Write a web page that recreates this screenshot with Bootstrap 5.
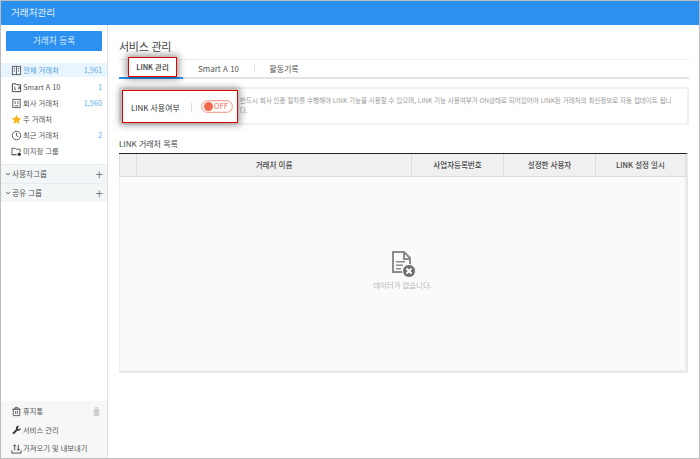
<!DOCTYPE html>
<html lang="ko">
<head>
    <meta charset="UTF-8">
    <meta name="viewport" content="width=device-width, initial-scale=1.0">
    <title>서비스 관리</title>
    <link href="https://cdn.jsdelivr.net/npm/bootstrap@5.3.2/dist/css/bootstrap.min.css" rel="stylesheet">
    <style>
        html, body { height: 100%; overflow: hidden; }
        body { font-family: "Noto Sans CJK KR", "Noto Sans", sans-serif; font-size: 7.3px; color: #444; background: #fff; }
        .app-frame { width: 700px; height: 459px; border: 1px solid #bdbdbd; display: flex; flex-direction: column; }
        .app-head { height: 24px; flex: none; background: #2b90ef; color: #e4f1fd; font-size: 9.6px; line-height: 22px; padding-left: 10px; }
        .app-body { flex: 1; min-height: 0; display: flex; }
        .side { width: 107px; flex: none; border-right: 1px solid #e2e2e2; display: flex; flex-direction: column; }
        .side-btn { display: block; margin: 6px 5px 0; width: 96px; height: 20px; padding: 0; border: 0; border-radius: 1px; background: #2b90ef; color: #dcedfd; font-size: 8.7px; line-height: 20px; }
        .side-list { margin-top: 12px; margin-bottom: 5px; }
        .side-row { height: 16px; padding: 0 5px 0 10px; display: flex; align-items: center; gap: 1px; color: #555; white-space: nowrap; }
        .side-row.on { height: 14px; margin-bottom: 2px; background: #e9f5fe; color: #4a9fe0; }
        .side-row svg { width: 11px; height: 11px; flex: none; }
        .side-row .cnt { margin-left: auto; color: #63aeea; }
        .side-group { height: 19px; background: #f3f6f7; border-top: 1px solid #e8ecee; padding: 0 4px; display: flex; align-items: center; gap: 1px; color: #555; font-size: 7.6px; }
        .side-group .plus { margin-left: auto; color: #666; font-size: 14px; line-height: 1; font-weight: 300; }
        .side-group svg { width: 6px; height: 6px; }
        .side-foot { margin-top: auto; background: #f7f7f7; padding-top: 2px; }
        .side-foot .side-row { height: 18.5px; }
        .main { flex: 1; min-width: 0; padding: 13px 10px 0 11px; }
        .main-title { font-size: 11px; font-weight: 400; line-height: 17px; letter-spacing: -.25px; color: #444; margin: 0; padding-bottom: 4px; border-bottom: 1px solid #eee; }
        .tab-strip { height: 19px; border-bottom: 2px solid #e4e4e4; display: flex; }
        .tab-item { width: 64px; text-align: center; font-size: 8px; line-height: 17px; color: #555; position: relative; }
        .tab-item.on { border-bottom: 2px solid #2b90ef; height: 19px; }
        .tab-item + .tab-item { width: 71px; }
        .tab-item + .tab-item + .tab-item { width: 60px; }
        .tab-item + .tab-item + .tab-item::before { content: ""; position: absolute; left: 0; top: 5px; height: 7px; border-left: 1px solid #e2e2e2; }
        .red-tab { position: absolute; left: 9px; top: -3px; width: 49px; height: 20px; border: 1px solid #e00000; background: #fff; box-shadow: 0 0 7px 2px rgba(0,0,0,.4); color: #333; font-size: 7.4px; line-height: 18px; font-weight: 500; }
        .info-box { height: 38px; margin-top: 8px; border: 2px solid #f1f1f1; display: flex; align-items: center; font-size: 6.5px; line-height: 10px; color: #999; }
        .red-box { width: 116px; height: 33px; flex: none; margin-left: 1px; border: 1px solid #e00000; background: #fff; box-shadow: 0 0 7px 2px rgba(0,0,0,.4); display: flex; align-items: center; padding-left: 8px; font-size: 7.9px; color: #333; position: relative; }
        .red-label { padding-top: 3px; }
        .red-box .sep { width: 1px; height: 9px; background: #ddd; margin: 3px 9px 0 11px; }
        .toggle-pill { width: 32px; height: 13px; border: 1px solid #f4a596; border-radius: 7px; background: #fff; display: flex; align-items: center; gap: 1px; padding-left: 2px; color: #f28a78; font-size: 7.6px; font-weight: 500; box-shadow: inset 0 0 0 1px #fde6e1; }
        .toggle-pill i { width: 9px; height: 9px; border-radius: 50%; background: #f4674f; flex: none; }
        .info-text { padding-left: 2px; padding-right: 8px; margin-top: -2px; width: 453px; }
        .sub-title { font-size: 8px; line-height: 12px; margin: 13px 0 3px; color: #444; }
        .grid-wrap { border-top: 1px solid #222; border-right: 2px solid #e8e8e8; border-bottom: 2px solid #e8e8e8; width: 569px; }
        .grid-table { margin: 0; table-layout: fixed; width: 100%; border-collapse: collapse; }
        .grid-table th { height: 22px; padding: 0; background: #f0f0f0; border: 1px solid #dcdcdc; border-top: 0; text-align: center; vertical-align: middle; font-size: 7.5px; font-weight: 500; color: #444; }
        .grid-table td { height: 194px; padding: 0 0 6px; background: #fafafa; border: 1px solid #eee; border-top: 0; text-align: center; vertical-align: middle; color: #b5b5b5; font-size: 7.4px; line-height: 10px; }
        .empty-icon { width: 28px; height: 29px; display: block; margin: 0 auto 1px; position: relative; left: 2px; }
    </style>
</head>
<body>
    <div class="app-frame">
        <div class="app-head">거래처관리</div>
        <div class="app-body">
            <aside class="side">
                <button type="button" class="btn side-btn">거래처 등록</button>
                <div class="side-list">
                    <div class="side-row on">
                        <svg viewBox="0 0 12 12" fill="none" stroke="#555"><rect x="1.5" y="1.5" width="9" height="9"/><path d="M6 1.5v9M3 4h1.5M3 6.5h1.5M7.5 4H9M7.5 6.5H9"/></svg>
                        전체 거래처<span class="cnt">1,961</span>
                    </div>
                    <div class="side-row">
                        <svg viewBox="0 0 12 12" fill="none" stroke="#333"><path d="M1.5 2h4l1 1h4v7.5h-9z"/><path d="M4 5v3h1.5M8 8l1-3 1 3" stroke-width=".8"/></svg>
                        Smart A 10<span class="cnt">1</span>
                    </div>
                    <div class="side-row">
                        <svg viewBox="0 0 12 12" fill="none" stroke="#555"><rect x="2" y="1.5" width="8" height="9"/><path d="M4.5 3.500v3M7.500 3.500v3M4 8.500h4"/></svg>
                        회사 거래처<span class="cnt">1,960</span>
                    </div>
                    <div class="side-row">
                        <svg viewBox="0 0 12 12"><path fill="#f5b81f" d="M6 .8l1.600 3.400 3.700.4-2.800 2.500.8 3.700L6 8.900l-3.300 1.900.8-3.700L.7 4.600l3.700-.4z"/></svg>
                        주 거래처
                    </div>
                    <div class="side-row">
                        <svg viewBox="0 0 12 12" fill="none" stroke="#555"><circle cx="6" cy="6" r="4.600"/><path d="M6 3v3.200l2 1.200"/></svg>
                        최근 거래처<span class="cnt">2</span>
                    </div>
                    <div class="side-row">
                        <svg viewBox="0 0 12 12" fill="none" stroke="#555"><path d="M1 2.500h3.500l1 1H10v3M6 9.500H1z"/><path d="M1 2.500v7"/><circle cx="9" cy="9" r="1.800" fill="#333" stroke="none"/></svg>
                        미지정 그룹
                    </div>
                </div>
                <div class="side-group">
                    <svg viewBox="0 0 6 6" fill="none" stroke="#666"><path d="M1 2l2 2 2-2"/></svg>
                    사용자그룹<span class="plus">+</span>
                </div>
                <div class="side-group">
                    <svg viewBox="0 0 6 6" fill="none" stroke="#666"><path d="M1 2l2 2 2-2"/></svg>
                    공유 그룹<span class="plus">+</span>
                </div>
                <div class="side-foot">
                    <div class="side-row">
                        <svg viewBox="0 0 12 12" fill="none" stroke="#555"><path d="M2.500 3.500h7v7h-7zM1.500 3.500h9M4.500 3.500V1.500h3v2M5 5.500v3M7 5.500v3"/></svg>
                        휴지통
                        <svg class="ms-auto" viewBox="0 0 12 12"><path fill="#cfcfcf" d="M3 3h6v8H3zM4.500 1h3v1.500h-3z"/></svg>
                    </div>
                    <div class="side-row">
                        <svg viewBox="0 0 12 12"><path fill="#333" d="M10.800 3.200a3 3 0 0 1-4 3l-3.700 4-1.700-1.600 4-3.700a3 3 0 0 1 3.500-4L7.200 3.500l1.200 1.300z"/></svg>
                        서비스 관리
                    </div>
                    <div class="side-row">
                        <svg viewBox="0 0 12 12" fill="none" stroke="#444"><path d="M1 8v3h10V8M4 8V2M2.500 3.500 4 2l1.500 1.500M8 2v6M6.500 6.500 8 8l1.500-1.500"/></svg>
                        가져오기 및 내보내기
                    </div>
                </div>
            </aside>
            <main class="main">
                <h2 class="main-title">서비스 관리</h2>
                <div class="tab-strip">
                    <div class="tab-item on"><div class="red-tab">LINK 관리</div></div>
                    <div class="tab-item">Smart A 10</div>
                    <div class="tab-item">활동기록</div>
                </div>
                <div class="info-box">
                    <div class="red-box">
                        <span class="red-label">LINK 사용여부</span><span class="sep"></span>
                        <span class="toggle-pill"><i></i>OFF</span>
                    </div>
                    <div class="info-text">반드시 회사 인증 절차를 수행해야 LINK 기능을 사용할 수 있으며, LINK 기능 사용여부가 ON상태로 되어있어야 LINK된 거래처의 최신정보로 자동 업데이트 됩니다.</div>
                </div>
                <div class="sub-title">LINK 거래처 목록</div>
                <div class="grid-wrap">
                    <table class="table grid-table">
                        <colgroup>
                            <col style="width: 17px">
                            <col style="width: 275px">
                            <col style="width: 92px">
                            <col style="width: 92px">
                            <col>
                        </colgroup>
                        <thead>
                            <tr>
                                <th></th>
                                <th>거래처 이름</th>
                                <th>사업자등록번호</th>
                                <th>설정한 사용자</th>
                                <th>LINK 설정 일시</th>
                            </tr>
                        </thead>
                        <tbody>
                            <tr>
                                <td colspan="5">
                                    <svg class="empty-icon" viewBox="0 0 28 29">
                                        <path fill="none" stroke="#8c8c8c" stroke-width="2" d="M2 2h11l6 6v14H2z"/>
                                        <path fill="#8c8c8c" d="M12 2h2v6h6v2h-8zM5 11h9v1.500H5zM5 14.500h7V16H5zM5 18h5v1.500H5z"/>
                                        <circle cx="18" cy="21" r="6.500" fill="#6f6f6f" stroke="#fafafa"/>
                                        <path stroke="#fff" stroke-width="1.800" d="M15.500 18.500l5 5M20.500 18.500l-5 5"/>
                                    </svg>
                                    데이터가 없습니다.
                                </td>
                            </tr>
                        </tbody>
                    </table>
                </div>
            </main>
        </div>
    </div>
    <script src="https://cdn.jsdelivr.net/npm/bootstrap@5.3.2/dist/js/bootstrap.bundle.min.js"></script>
</body>
</html>
